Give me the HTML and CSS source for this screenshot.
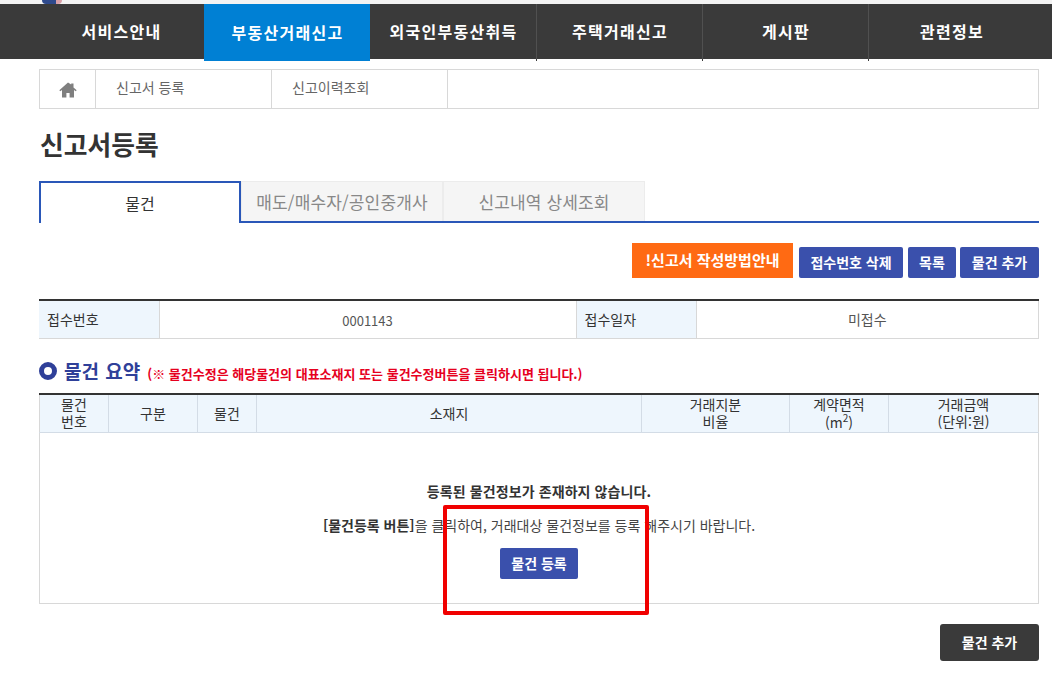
FILE: index.html
```html
<!DOCTYPE html>
<html lang="ko">
<head>
<meta charset="utf-8">
<title>신고서등록</title>
<link rel="stylesheet" href="styles.css">
</head>
<body>
<div class="topstrip"><span class="logo-bit"></span></div>
<nav class="gnb">
  <a class="gnb-item">서비스안내</a>
  <a class="gnb-item active">부동산거래신고</a>
  <a class="gnb-item">외국인부동산취득</a>
  <a class="gnb-item split">주택거래신고</a>
  <a class="gnb-item split">게시판</a>
  <a class="gnb-item split">관련정보</a>
</nav>
<main class="wrap">
  <div class="crumbs">
    <div class="crumb home">
      <svg width="18" height="16" viewBox="0 0 18 16"><path fill="#7f7f7f" d="M9 .5 .3 8.2l1 1L3 7.9V15.5h4.4v-4.6h3.2v4.6H15V7.9l1.7 1.3 1-1-3.2-2.8V1.5h-2.3v1z"/></svg>
    </div>
    <div class="crumb">신고서 등록</div>
    <div class="crumb">신고이력조회</div>
    <div class="crumb-rest"></div>
  </div>
  <h1 class="title">신고서등록</h1>
  <div class="tabs">
    <div class="tab on">물건</div>
    <div class="tab">매도/매수자/공인중개사</div>
    <div class="tab">신고내역 상세조회</div>
  </div>
  <div class="actions">
    <a class="btn orange">!신고서 작성방법안내</a>
    <a class="btn blue b1">접수번호 삭제</a>
    <a class="btn blue b2">목록</a>
    <a class="btn blue b3">물건 추가</a>
  </div>
  <table class="info">
    <colgroup><col class="c1"><col class="c2"><col class="c3"><col></colgroup>
    <tr><th>접수번호</th><td>0001143</td><th>접수일자</th><td>미접수</td></tr>
  </table>
  <div class="sec">
    <span class="ring"></span>
    <h2>물건 요약</h2>
    <span class="note">(※ 물건수정은 해당물건의 대표소재지 또는 물건수정버튼을 클릭하시면 됩니다.)</span>
  </div>
  <table class="list">
    <colgroup><col class="l1"><col class="l2"><col class="l3"><col class="l4"><col class="l5"><col class="l6"><col></colgroup>
    <tr>
      <th>물건<br>번호</th><th>구분</th><th>물건</th><th>소재지</th><th>거래지분<br>비율</th><th>계약면적<br>(m<sup>2</sup>)</th><th>거래금액<br>(단위:원)</th>
    </tr>
    <tr>
      <td colspan="7" class="empty">
        <p class="msg1">등록된 물건정보가 존재하지 않습니다.</p>
        <p class="msg2"><b>[물건등록 버튼]</b>을 클릭하여, 거래대상 물건정보를 등록 해주시기 바랍니다.</p>
        <a class="btn blue reg">물건 등록</a>
      </td>
    </tr>
  </table>
  <div class="bottom"><a class="btn dark">물건 추가</a></div>
</main>
<div class="mark"></div>
</body>
</html>
```
FILE: styles.css
```css
* { box-sizing: border-box; }
html, body { margin: 0; padding: 0; }
body {
  position: relative;
  width: 1052px;
  height: 698px;
  overflow: hidden;
  background: #fff;
  color: #333;
  font-family: "Noto Sans CJK KR", "Noto Sans", sans-serif;
  font-size: 13px;
}
.topstrip { height: 4px; background: #f3f3f3; padding-left: 42px; overflow: hidden; }
.logo-bit { display: block; width: 20px; height: 4px; background: linear-gradient(90deg, #2f4a8c 70%, #d9a0a8 70%); border-radius: 0 0 10px 10px; }
.gnb { display: flex; height: 55px; padding-left: 38px; background: #3a3a3a; }
.gnb-item {
  position: relative;
  width: 166px; height: 55px;
  display: flex; align-items: center; justify-content: center;
  color: #fff; font-size: 16px; font-weight: 700;
  padding: 0 0 1px 1px;
  letter-spacing: 1.3px;
}
.gnb-item.split { border-left: 1px solid #505050; }
.gnb-item.split::after {
  content: ""; position: absolute; left: -1px; top: 55px;
  width: 1px; height: 2px; background: #3a3a3a;
}
.gnb-item.active { height: 57px; background: #0080d4; }
.wrap { padding: 10px 13px 0 39px; }
.crumbs { display: flex; height: 40px; border: 1px solid #d8d8d8; }
.crumb {
  width: 176px; border-right: 1px solid #d8d8d8;
  padding: 0 0 5px 20px; display: flex; align-items: center;
  font-size: 14px; color: #666;
}
.crumb.home { width: 56px; padding: 2px 0 0 19px; }
.crumb-rest { flex: 1; }
.title { margin: 17px 0 0 1px; height: 36px; font-size: 25.8px; line-height: 36px; font-weight: 700; color: #333; }
.tabs { display: flex; margin-top: 19px; height: 42px; border-bottom: 2px solid #2a57b8; }
.tab {
  width: 202px; height: 40px; background: #f5f5f5;
  border: 1px solid #ececec; border-bottom: 0;
  display: flex; align-items: center; justify-content: center;
  font-size: 17px; color: #888; padding-bottom: 1px; letter-spacing: .15px;
}
.tab.on {
  height: 42px; background: #fff; color: #333; font-size: 16px;
  border: 2px solid #2a57b8; border-bottom: 0;
  position: relative; z-index: 1;
}
.actions { display: flex; justify-content: flex-end; align-items: flex-end; gap: 4px; height: 35px; margin-top: 20px; margin-bottom: 21px; }
.btn {
  display: flex; align-items: center; justify-content: center;
  color: #fff; font-weight: 700; font-size: 14px;
}
.orange { width: 161px; height: 35px; background: #ff6a13; font-size: 15px; margin-right: 2px; padding-bottom: 3px; }
.blue { height: 31px; background: #3a50ac; border-radius: 2px; padding-bottom: 1px; }
.b1 { width: 104px; margin-right: 1px; }
.b2 { width: 48px; }
.b3 { width: 79px; }
table { border-collapse: collapse; table-layout: fixed; width: 1000px; }
.info { border-top: 2px solid #333; height: 40px; }
.info th, .info td { border: 1px solid #d8d8d8; border-top: 0; font-size: 13px; padding: 0 0 2px; }
.info th:first-child { border-left: 0; }
.info th { background: #eef6fd; font-weight: 400; text-align: left; padding-left: 8px; color: #333; font-size: 14px; }
.info td { text-align: center; color: #555; font-size: 13px; padding-top: 3px; }
.info td:last-child { font-size: 14px; padding-top: 0; }
.c1 { width: 120px; }
.c2 { width: 417px; }
.c3 { width: 120px; }
.sec { display: flex; align-items: center; height: 54px; padding-top: 9px; }
.ring { width: 18px; height: 18px; border: 5px solid #2f4099; border-radius: 50%; margin-right: 7px; }
.sec h2 { margin: 0 7px 0 0; font-size: 19px; font-weight: 700; color: #2f4099; word-spacing: 1px; }
.note { color: #e6001e; font-size: 13px; font-weight: 700; padding-top: 6px; }
.list { border-top: 2px solid #333; }
.list th {
  height: 38px; background: #eef6fd; border: 1px solid #d3dce6; border-top: 0;
  font-size: 14px; font-weight: 400; line-height: 17px; padding: 0; color: #333;
}
.list th:first-child { border-left-color: #d8d8d8; }
.list th:last-child { border-right-color: #d8d8d8; }
.list sup { font-size: 10px; line-height: 1; }
.l1 { width: 69px; }
.l2 { width: 89px; }
.l3 { width: 59px; }
.l4 { width: 385px; }
.l5 { width: 148px; }
.l6 { width: 99px; }
.empty { height: 171px; border: 1px solid #d8d8d8; text-align: center; vertical-align: top; padding: 0; }
.msg1 { margin: 49px 0 0; font-size: 14px; font-weight: 700; line-height: 19px; color: #333; letter-spacing: .1px; }
.msg2 { margin: 15px 0 0; font-size: 14px; line-height: 19px; color: #444; }
.msg2 b { color: #333; }
.reg { width: 78px; margin: 13px auto 0; }
.bottom { display: flex; justify-content: flex-end; margin-top: 20px; }
.dark { width: 99px; height: 37px; background: #3a3a3a; border-radius: 3px; }
.mark {
  position: absolute; left: 443px; top: 505px; width: 206px; height: 110px;
  border: 4px solid #f00000; border-radius: 2px;
}
```
